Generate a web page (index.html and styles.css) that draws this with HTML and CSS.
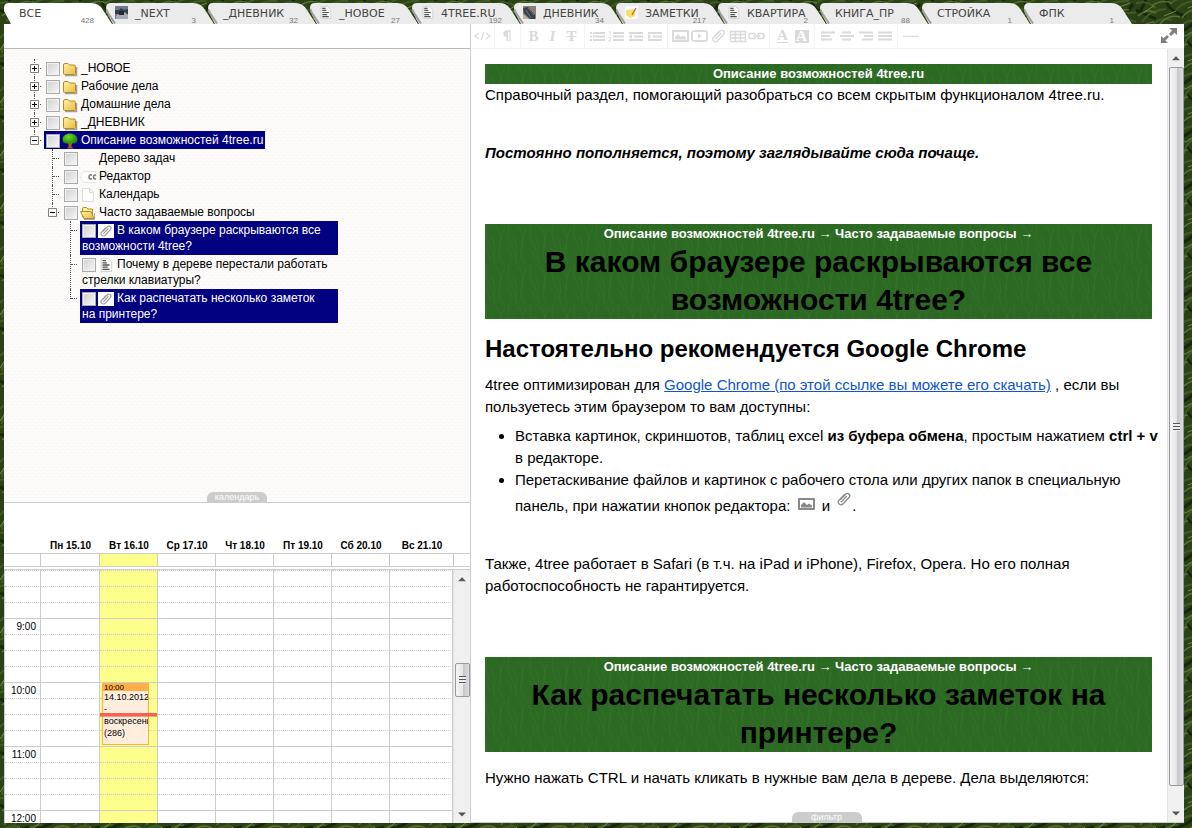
FILE: index.html
```html
<!DOCTYPE html>
<html lang="ru">
<head>
<meta charset="utf-8">
<title>4tree.ru</title>
<link rel="stylesheet" href="styles.css">
</head>
<body>
<svg class="sprite" aria-hidden="true">
  <defs>
    <linearGradient id="gold" x1="0" y1="0" x2="1" y2="1"><stop offset="0" stop-color="#fff3a8"/><stop offset="1" stop-color="#e9b93c"/></linearGradient>
    <radialGradient id="leaf" cx=".4" cy=".3" r=".7"><stop offset="0" stop-color="#6fe01c"/><stop offset="1" stop-color="#117a08"/></radialGradient>
  </defs>
  <symbol id="tab" viewBox="0 0 110 21"><path d="M0 5Q0 0 5 0H87Q95 0 99 7L108 21H7L0 8Z" fill="currentColor"/></symbol>
  <symbol id="tab-shade" viewBox="0 0 110 21"><path d="M0 6L2 10L9 20.500" fill="none" stroke="#777" stroke-opacity=".65" stroke-width="2"/></symbol>
  <symbol id="plus" viewBox="0 0 9 9"><path d="M.5.5h8v8h-8z" fill="#fff" stroke="#808080"/><path d="M2 4.500h5M4.500 2v5" stroke="#000"/></symbol>
  <symbol id="minus" viewBox="0 0 9 9"><path d="M.5.5h8v8h-8z" fill="#fff" stroke="#808080"/><path d="M2 4.500h5" stroke="#000"/></symbol>
  <symbol id="folder" viewBox="0 0 16 16"><path d="M3 14.500h11.500V6" fill="none" stroke="#777" stroke-opacity=".7" stroke-width="1.500"/><path d="M1.500 12.500V4Q1.500 2.500 3 2.500h3L7.500 4H12Q13.500 4 13.500 5.500V12.500Q13.500 13.500 12.500 13.500H2.500Q1.500 13.500 1.500 12.500Z" fill="url(#gold)" stroke="#b58a1f"/></symbol>
  <symbol id="folder-open" viewBox="0 0 16 16"><path d="M4 14.500h10.500V8" fill="none" stroke="#777" stroke-opacity=".6"/><path d="M2.500 12V3.500Q2.500 2.500 3.500 2.500h3L8 4h4.500V12Z" fill="#ffec9a" stroke="#b58a1f"/><path d="M.5 6.500H11L14 13.500H4Z" fill="url(#gold)" stroke="#b58a1f"/></symbol>
  <symbol id="tree" viewBox="0 0 16 16"><path d="M6.500 9h3v4.500l2 2h-6.500l1.500-2z" fill="#a65a12"/><path d="M8 .5C12 .5 15.500 3 15.500 6.500C15.500 10 12 11 10 10.500L8 12L6 10.500C3 11 .5 9.500.5 6.500C.5 3 4 .5 8 .5Z" fill="url(#leaf)"/><path d="M7 10l1 3l2-3.500" stroke="#c46a1c" fill="none"/></symbol>
  <symbol id="toggle" viewBox="0 0 16 16"><path d="M16 2.500H6Q1 3 1 8Q1 13 6 13.500H16" fill="#fff" stroke="#e4e4e4"/><path d="M12 6.200Q9 5 9 8Q9 11 12 9.700M16 6.200Q13.500 5.500 13.500 8Q13.500 10.500 16 10" fill="none" stroke="#777" stroke-width="1.500"/></symbol>
  <symbol id="blank" viewBox="0 0 16 16"><path d="M2.500 1.500h7l4 4v9h-11z" fill="#fff" stroke="#ddd"/><path d="M9.500 1.500v4h4" fill="none" stroke="#ddd"/></symbol>
  <symbol id="doc" viewBox="0 0 16 16"><path d="M2.500.5h8l4 4v11h-12z" fill="#f8f8f8" stroke="#ccc"/><path d="M4 3h4M4 5.500h5M4 8h8M4 10.500h6M4 13h8" stroke="#555" stroke-width="1.500"/></symbol>
  <symbol id="clip" viewBox="0 0 16 16"><path d="M4.500 8.500L9.500 3.300Q11.300 1.500 13 3T13 6.500L7.500 12.500Q5.300 14.700 3.200 13T3 9.300L8.500 3.500M10.800 5L6.300 9.900Q5.300 11 4.700 10.300" fill="none" stroke="currentColor" stroke-width="1.300"/></symbol>
  <symbol id="image" viewBox="0 0 17 13"><path d="M1 1h15v10H1z" fill="none" stroke="currentColor" stroke-width="2" stroke-linejoin="round"/><path d="M3 9.500V7l3-3l3 3l2-1.500l3 2V9.500z" fill="currentColor"/></symbol>
</svg>

<div class="app">
  <nav class="tabs" aria-label="Разделы">
    <a class="tab active" href="#"><svg class="shape"><use href="#tab"/></svg><span class="label">ВСЕ</span><span class="count">428</span></a>
    <a class="tab" href="#"><svg class="shape"><use href="#tab"/><use href="#tab-shade"/></svg><svg class="thumbnail" viewBox="0 0 13 13"><path d="M0 0h13v13H0z" fill="#707987"/><path d="M0 4h4l2-2 3 2 4-1v5H0z" fill="#343d4c"/><path d="M1 10l4-3 2 2 3-3 3 3v4H1z" fill="#a6abb3"/><path d="M4 5h5v4H4z" fill="#252b36"/></svg><span class="label">_NEXT</span><span class="count">3</span></a>
    <a class="tab" href="#"><svg class="shape"><use href="#tab"/><use href="#tab-shade"/></svg><span class="label">_ДНЕВНИК</span><span class="count">32</span></a>
    <a class="tab" href="#"><svg class="shape"><use href="#tab"/><use href="#tab-shade"/></svg><svg class="thumbnail"><use href="#doc"/></svg><span class="label">_НОВОЕ</span><span class="count">27</span></a>
    <a class="tab" href="#"><svg class="shape"><use href="#tab"/><use href="#tab-shade"/></svg><svg class="thumbnail"><use href="#doc"/></svg><span class="label">4TREE.RU</span><span class="count">192</span></a>
    <a class="tab" href="#"><svg class="shape"><use href="#tab"/><use href="#tab-shade"/></svg><svg class="thumbnail" viewBox="0 0 13 13"><path d="M0 0h13v13H0z" fill="#8b7f72"/><path d="M0 2l5-1 7 8v4H7L1 7z" fill="#3a404a"/><path d="M5 2l6 7M3 4l5 8" stroke="#6f7886"/><path d="M0 8l6 5H0z" fill="#c0b6a8"/></svg><span class="label">ДНЕВНИК</span><span class="count">34</span></a>
    <a class="tab" href="#"><svg class="shape"><use href="#tab"/><use href="#tab-shade"/></svg><svg class="thumbnail" viewBox="0 0 13 13"><path d="M0 0h13v13H0z" fill="#fafafa"/><path d="M1 4l8-1 1 7-5 2-4-3z" fill="#f4e06c"/><path d="M11 2L7 9" stroke="#c66c2c" stroke-width="1.500"/></svg><span class="label">ЗАМЕТКИ</span><span class="count">217</span></a>
    <a class="tab" href="#"><svg class="shape"><use href="#tab"/><use href="#tab-shade"/></svg><svg class="thumbnail"><use href="#doc"/></svg><span class="label">КВАРТИРА</span><span class="count">2</span></a>
    <a class="tab" href="#"><svg class="shape"><use href="#tab"/><use href="#tab-shade"/></svg><span class="label">КНИГА_ПР</span><span class="count">88</span></a>
    <a class="tab" href="#"><svg class="shape"><use href="#tab"/><use href="#tab-shade"/></svg><span class="label">СТРОЙКА</span><span class="count">1</span></a>
    <a class="tab" href="#"><svg class="shape"><use href="#tab"/><use href="#tab-shade"/></svg><span class="label">ФПК</span><span class="count">1</span></a>
  </nav>

  <main class="window">
    <div class="sidebar">
      <div class="sidebar-head"></div>
      <div class="tree-panel">
        <ul class="tree">
          <li><button class="expander" aria-label="Развернуть"><svg><use href="#plus"/></svg></button><label class="node"><input type="checkbox"><svg><use href="#folder"/></svg>_НОВОЕ</label></li>
          <li><button class="expander" aria-label="Развернуть"><svg><use href="#plus"/></svg></button><label class="node"><input type="checkbox"><svg><use href="#folder"/></svg>Рабочие дела</label></li>
          <li><button class="expander" aria-label="Развернуть"><svg><use href="#plus"/></svg></button><label class="node"><input type="checkbox"><svg><use href="#folder"/></svg>Домашние дела</label></li>
          <li><button class="expander" aria-label="Развернуть"><svg><use href="#plus"/></svg></button><label class="node"><input type="checkbox"><svg><use href="#folder"/></svg>_ДНЕВНИК</label></li>
          <li><button class="expander" aria-label="Свернуть"><svg><use href="#minus"/></svg></button><label class="node selected"><input type="checkbox"><svg><use href="#tree"/></svg>Описание возможностей 4tree.ru</label>
            <ul>
              <li><label class="node"><input type="checkbox"><svg></svg>Дерево задач</label></li>
              <li><label class="node"><input type="checkbox"><svg><use href="#toggle"/></svg>Редактор</label></li>
              <li><label class="node"><input type="checkbox"><svg><use href="#blank"/></svg>Календарь</label></li>
              <li><button class="expander" aria-label="Свернуть"><svg><use href="#minus"/></svg></button><label class="node"><input type="checkbox"><svg><use href="#folder-open"/></svg>Часто задаваемые вопросы</label>
                <ul>
                  <li><label class="node long selected"><input type="checkbox"><svg class="attached"><use href="#clip"/></svg>В каком браузере раскрываются все возможности 4tree?</label></li>
                  <li><label class="node long"><input type="checkbox"><svg><use href="#doc"/></svg>Почему в дереве перестали работать стрелки клавиатуры?</label></li>
                  <li><label class="node long selected"><input type="checkbox"><svg class="attached"><use href="#clip"/></svg>Как распечатать несколько заметок на принтере?</label></li>
                </ul>
              </li>
            </ul>
          </li>
        </ul>
        <button class="handle">календарь</button>
      </div>

      <section class="calendar">
        <table class="week">
          <colgroup><col class="c-time"><col class="c-first"><col class="c-day"><col class="c-day"><col class="c-day"><col class="c-day"><col class="c-day"><col><col class="c-gutter"></colgroup>
          <thead><tr><th></th><th>Пн 15.10</th><th>Вт 16.10</th><th>Ср 17.10</th><th>Чт 18.10</th><th>Пт 19.10</th><th>Сб 20.10</th><th>Вс 21.10</th><th></th></tr></thead>
          <tbody><tr><td></td><td></td><td class="today"></td><td></td><td></td><td></td><td></td><td></td><td></td></tr></tbody>
        </table>
        <div class="slots-area">
          <div class="slots-view">
            <table class="slots">
              <colgroup><col class="c-time"><col class="c-first"><col class="c-day"><col class="c-day"><col class="c-day"><col class="c-day"><col class="c-day"><col></colgroup>
              <tbody>
                <tr><th></th><td></td><td></td><td></td><td></td><td></td><td></td><td></td></tr>
                <tr><th></th><td></td><td></td><td></td><td></td><td></td><td></td><td></td></tr>
                <tr><th></th><td></td><td></td><td></td><td></td><td></td><td></td><td></td></tr>
                <tr class="hour"><th>9:00</th><td></td><td></td><td></td><td></td><td></td><td></td><td></td></tr>
                <tr><th></th><td></td><td></td><td></td><td></td><td></td><td></td><td></td></tr>
                <tr><th></th><td></td><td></td><td></td><td></td><td></td><td></td><td></td></tr>
                <tr><th></th><td></td><td></td><td></td><td></td><td></td><td></td><td></td></tr>
                <tr class="hour"><th>10:00</th><td></td><td><div class="event"><div class="event-time">10:00</div>14.10.2012 - воскресенье (286)</div><div class="now"></div></td><td></td><td></td><td></td><td></td><td></td></tr>
                <tr><th></th><td></td><td></td><td></td><td></td><td></td><td></td><td></td></tr>
                <tr><th></th><td></td><td></td><td></td><td></td><td></td><td></td><td></td></tr>
                <tr><th></th><td></td><td></td><td></td><td></td><td></td><td></td><td></td></tr>
                <tr class="hour"><th>11:00</th><td></td><td></td><td></td><td></td><td></td><td></td><td></td></tr>
                <tr><th></th><td></td><td></td><td></td><td></td><td></td><td></td><td></td></tr>
                <tr><th></th><td></td><td></td><td></td><td></td><td></td><td></td><td></td></tr>
                <tr><th></th><td></td><td></td><td></td><td></td><td></td><td></td><td></td></tr>
                <tr class="hour"><th>12:00</th><td></td><td></td><td></td><td></td><td></td><td></td><td></td></tr>
              </tbody>
            </table>
          </div>
          <div class="scrollbar calendar-scroll" aria-hidden="true"><i class="arrow up"></i><span class="before"></span><span class="thumb"><i class="grip"></i></span><span class="after"></span><i class="arrow down"></i></div>
        </div>
      </section>
    </div>

    <div class="editor">
      <div class="toolbar" role="toolbar" aria-label="Форматирование">
        <div class="group"><button aria-label="Код"><svg viewBox="0 0 19 16"><path d="M6 5L2 8l4 3M13 5l4 3l-4 3M11 4L8 12" fill="none" stroke="currentColor" stroke-width="1.200"/></svg></button></div>
        <div class="group"><button aria-label="Абзац"><svg viewBox="0 0 19 16"><path d="M13 3H8.500Q6 3.500 6 5.700Q6 8 9 8.500V13M9.500 3v10M12 3v10" fill="none" stroke="currentColor" stroke-width="1.300"/><path d="M9.500 3H8Q6 3.500 6 5.700T9.500 8.500z" fill="currentColor"/></svg></button></div>
        <div class="group"><button class="glyph bold" aria-label="Полужирный">B</button><button class="glyph italic" aria-label="Курсив">I</button><button class="glyph strike" aria-label="Зачёркнутый">T</button></div>
        <div class="group">
          <button aria-label="Маркированный список"><svg viewBox="0 0 19 16"><path d="M2 5h2M2 8.500h2M2 12h2M5 5h12M5 8.500h12M5 12h12" stroke="currentColor" stroke-width="2"/></svg></button>
          <button aria-label="Нумерованный список"><svg viewBox="0 0 19 16"><path d="M6 5h11M6 8.500h11M6 12h11" stroke="currentColor" stroke-width="2"/><path d="M2 3.500h1v4M1.500 9.500h2v1.500l-2 2h2.500" stroke="currentColor" fill="none"/></svg></button>
          <button aria-label="Уменьшить отступ"><svg viewBox="0 0 19 16"><path d="M3 5h14M8 8.500h9M3 12h14" stroke="currentColor" stroke-width="2"/><path d="M6 6v5L2.500 8.500z" fill="currentColor"/></svg></button>
          <button aria-label="Увеличить отступ"><svg viewBox="0 0 19 16"><path d="M3 5h14M8 8.500h9M3 12h14" stroke="currentColor" stroke-width="2"/><path d="M3 6v5l3.500-2.500z" fill="currentColor"/></svg></button>
        </div>
        <div class="group">
          <button aria-label="Изображение"><svg viewBox="0 0 19 16"><use href="#image" x="1" y="2" width="17" height="13"/></svg></button>
          <button aria-label="Видео"><svg viewBox="0 0 19 16"><rect x="2" y="3" width="15" height="10" rx="2" fill="none" stroke="currentColor" stroke-width="1.800"/><path d="M8 5.500v5l4-2.500z" fill="currentColor"/></svg></button>
          <button aria-label="Файл"><svg viewBox="0 0 16 16"><use href="#clip"/></svg></button>
          <button aria-label="Таблица"><svg viewBox="0 0 19 16"><path d="M2.500 3.500h15v10h-15zM2.500 6.500h15M2.500 10h15M7.500 3.500v10M12.500 3.500v10" fill="none" stroke="currentColor" stroke-width="1.400"/></svg></button>
          <button aria-label="Ссылка"><svg viewBox="0 0 19 16"><path d="M8 5.500H4Q2 5.500 2 8t2 2.500h4V9M11 5.500h4q2 0 2 2.500t-2 2.500h-4V9M8 7V5.500M11 7V5.500M6 8h7" fill="none" stroke="currentColor" stroke-width="1.600"/></svg></button>
        </div>
        <div class="group"><button class="glyph colour" aria-label="Цвет текста"><span>A</span></button><button class="glyph fill" aria-label="Цвет фона"><span>A</span></button></div>
        <div class="group">
          <button aria-label="По левому краю"><svg viewBox="0 0 19 16"><path d="M3 4.500h14M3 8h9M3 11.500h11" stroke="currentColor" stroke-width="2"/></svg></button>
          <button aria-label="По центру"><svg viewBox="0 0 19 16"><path d="M5 4.500h9M3 8h14M5 11.500h9" stroke="currentColor" stroke-width="2"/></svg></button>
          <button aria-label="По правому краю"><svg viewBox="0 0 19 16"><path d="M3 4.500h14M8 8h9M6 11.500h11" stroke="currentColor" stroke-width="2"/></svg></button>
          <button aria-label="По ширине"><svg viewBox="0 0 19 16"><path d="M3 4.500h14M3 8h14M3 11.500h14" stroke="currentColor" stroke-width="2"/></svg></button>
        </div>
        <div class="group last"><button aria-label="Линия"><svg viewBox="0 0 19 16"><path d="M2 8.500h16" stroke="currentColor" stroke-width="1.200"/></svg></button></div>
        <button class="expand" aria-label="На весь экран"><svg viewBox="0 0 16 15"><path d="M8 0h8v7l-2.500-2.200L10 8 8 6l3-3.500zM0 15V8l2.500 2.300L6 7l2 2-3.500 3.500L7 15z" fill="currentColor"/></svg></button>
      </div>
      <div class="page-area">
        <article class="page">
          <header class="banner lone"><p class="crumbs">Описание возможностей 4tree.ru</p></header>
          <p class="intro">Справочный раздел, помогающий разобраться со всем скрытым функционалом 4tree.ru.</p>
          <p class="notice">Постоянно пополняется, поэтому заглядывайте сюда почаще.</p>
          <header class="banner"><p class="crumbs">Описание возможностей 4tree.ru → Часто задаваемые вопросы →</p><h1>В каком браузере раскрываются все возможности 4tree?</h1></header>
          <h2>Настоятельно рекомендуется Google Chrome</h2>
          <p>4tree оптимизирован для <a href="#">Google Chrome (по этой ссылке вы можете его скачать)</a> , если вы пользуетесь этим браузером то вам доступны:</p>
          <ul>
            <li>Вставка картинок, скриншотов, таблиц excel <b>из буфера обмена</b>, простым нажатием <b>ctrl + v</b> в редакторе.</li>
            <li>Перетаскивание файлов и картинок с рабочего стола или других папок в специальную панель, при нажатии кнопок редактора: <svg class="inline-image"><use href="#image"/></svg> и <svg class="inline-clip"><use href="#clip"/></svg>.</li>
          </ul>
          <p class="also">Также, 4tree работает в Safari (в т.ч. на iPad и iPhone), Firefox, Opera. Но его полная работоспособность не гарантируется.</p>
          <header class="banner"><p class="crumbs">Описание возможностей 4tree.ru → Часто задаваемые вопросы →</p><h1>Как распечатать несколько заметок на принтере?</h1></header>
          <p class="answer">Нужно нажать CTRL и начать кликать в нужные вам дела в дереве. Дела выделяются:</p>
        </article>
        <div class="scrollbar page-scroll" aria-hidden="true"><i class="arrow up"></i><span class="thumb"><i class="grip"></i></span><span class="after"></span><i class="arrow down"></i></div>
      </div>
      <button class="handle filter">фильтр</button>
    </div>
  </main>
</div>
</body>
</html>
```
FILE: styles.css
```css
* { box-sizing: border-box; }

body {
  margin: 0;
  height: 100vh;
  overflow: hidden;
  font-family: "Liberation Sans", Arial, sans-serif;
  font-size: 12px;
  color: #000;
  background: #2b4217 url("data:image/svg+xml,%3Csvg xmlns='http://www.w3.org/2000/svg' width='71' height='53' fill='none' stroke-width='2'%3E%3Cpath stroke='%23182609' stroke-width='3' d='M0 10l20 9M30 0q3 12 20 16M60 20q-9 12-24 13M5 50q9-16 24-18M70 52q-13-2-20-12M10 0l-6 12M68 4l-9 12M30 50l8-9'/%3E%3Cpath stroke='%233f5a25' d='M-2 4q12-5 22 4M6 22q8-12 24-13M14 30q6-14 22-10M40 10q8-10 24-9M44 26q12-10 28-4M22 46q4-16 20-16M48 48q2-14 16-17M0 38q8-9 20-6M2 54q0-13 12-16M34 4q7-6 14-6M56 12q8 2 16 0M30 56q4-12 14-14M60 56q2-10 12-12'/%3E%3Cpath stroke='%23557233' stroke-width='1.500' d='M2 16q10-8 18-3M16 6q9-7 20-3M24 24q8-10 20-7M46 18q6-10 18-8M50 36q10-8 20-3M10 46q4-11 16-12M34 40q8-7 16-4M4 30q4-7 14-8M38 52q8-8 14-8M66 48q0-5 6-8'/%3E%3Cpath stroke='%236d8c44' stroke-width='1' d='M8 12l10-6M28 16l12-5M52 8l13-5M32 34l10-8M12 40l8-8M56 44l9-8M60 26l9-2M0 50l6-9'/%3E%3C/svg%3E");
}

button { padding: 0; border: 0; background: none; font: inherit; color: inherit; cursor: pointer; }
svg { display: block; }
.sprite { position: absolute; width: 0; height: 0; }

.app { display: flex; flex-direction: column; height: 100%; padding: 3px 8px 5px 4px; }

.tabs { display: flex; height: 21px; flex: none; }
.tab {
  position: relative;
  display: flex;
  align-items: center;
  flex: 0 0 102px;
  padding-left: 15px;
  color: #ebebeb;
  text-decoration: none;
  font: 11px/21px "DejaVu Sans", Verdana, sans-serif;
}
.tab.active { color: #fff; }
.tab .shape { position: absolute; inset: 0 auto auto 0; width: 110px; height: 21px; }
.tab .label { position: relative; color: #444; }
.tab .thumbnail { position: relative; width: 13px; height: 13px; margin: 0 7px 2px -6px; }
.tab .count { position: absolute; right: 12px; bottom: 0; color: #777; font: 8px/7px "Liberation Sans", Arial, sans-serif; }

.window {
  display: grid;
  grid-template-columns: 467px minmax(0, 1fr);
  flex: 1;
  min-height: 0;
  background: #fff;
}

.sidebar { display: flex; flex-direction: column; min-height: 0; border-right: 1px solid #ccc; }
.sidebar-head { height: 25px; flex: none; border-bottom: 1px solid #b9bcb4; }

.tree-panel {
  position: relative;
  flex: 1;
  min-height: 0;
  padding: 10px 26px;
  border-bottom: 1px solid #ccc;
  background: #fcfbf9 url("data:image/svg+xml,%3Csvg xmlns='http://www.w3.org/2000/svg' width='6' height='6'%3E%3Cpath stroke='%23f9f7f4' d='M0 1.500h3M3 4.500h3'/%3E%3C/svg%3E");
}
.tree, .tree ul { margin: 0; padding: 0; list-style: none; }
.tree ul { margin-left: 4px; }
.tree li { position: relative; padding-left: 14px; line-height: 18px; }
.tree li::before { content: ""; position: absolute; left: 4px; top: 0; bottom: 0; border-left: 1px dotted #555; }
.tree li:last-child::before { bottom: auto; height: 10px; }
.tree li::after { content: ""; position: absolute; left: 5px; top: 9px; width: 6px; border-top: 1px dotted #555; }
.expander { position: absolute; z-index: 1; left: 0; top: 5px; width: 9px; height: 9px; }
.expander svg { width: 9px; height: 9px; }
.node { display: table; padding: 0 2px; white-space: nowrap; font-size: 12px; }
.node.long { display: block; width: 258px; padding: 1px 10px 1px 2px; line-height: 16px; white-space: normal; }
.node.selected { background: #000080; color: #fff; }
.node input {
  appearance: none;
  width: 14px;
  height: 14px;
  margin: 0 2px 0 0;
  border: 1px solid #aaa;
  background: linear-gradient(135deg, #cfcfcf, #f8f8f8);
  box-shadow: inset 0 0 0 1px #f0f0f0;
  vertical-align: middle;
}
.node svg { display: inline-block; width: 16px; height: 16px; margin-right: 3px; vertical-align: middle; }
.node.long svg { height: 14px; }
.node .attached { background: #fff; color: #999; }

.handle {
  position: absolute;
  left: 50%;
  bottom: 0;
  width: 60px;
  height: 10px;
  margin-left: -30px;
  border-radius: 6px 6px 0 0;
  background: #ccc;
  color: #fff;
  font: 9px/10px "Liberation Sans", sans-serif;
}

.calendar { display: flex; flex-direction: column; flex: 0 0 320px; min-height: 0; height: 320px; max-height: 320px; }
.calendar table { width: 100%; table-layout: fixed; border-collapse: separate; border-spacing: 0; }
.calendar td, .calendar th { padding: 0; }
.c-time { width: 37px; }
.c-first { width: 59px; }
.c-day { width: 58px; }
.c-gutter { width: 16px; }
.week { flex: none; }
.week th { height: 51px; padding-bottom: 2px; vertical-align: bottom; border-bottom: 1px solid #ccc; font: bold 10px/11px "Liberation Sans", sans-serif; }
.week td { height: 12px; border-right: 1px solid #ccc; }
.week td:last-child { border-right: 0; }
.week .today { background: #fdff8c; }
.slots-area { display: flex; flex: 1; min-height: 0; border-top: 4px double #ccc; }
.slots-view { flex: 1; overflow: hidden; border-left: 1px solid #ccc; }
.slots .c-time { width: 36px; }
.slots td, .slots th { position: relative; height: 16px; border-top: 1px dotted #ccc; border-right: 1px solid #ccc; }
.slots .hour td, .slots .hour th { border-top-style: solid; }
.slots th { padding-right: 4px; text-align: right; font: 10px/15px "Liberation Sans", sans-serif; }
.slots td:nth-child(3) { background: #fdff8c; }
.event {
  position: absolute;
  z-index: 1;
  left: 2px;
  top: 0;
  width: 47px;
  height: 62px;
  padding: 0 1px;
  overflow: hidden;
  border: 1px solid #ffad46;
  background: #ffeedd;
  font-size: 9px;
  line-height: 12px;
}
.event-time { margin: 0 -1px; padding-left: 1px; background: #ffad46; font-size: 8px; line-height: 7px; }
.now { position: absolute; z-index: 2; left: 0; right: 0; top: 30px; height: 3px; background: #ff5f52; box-shadow: 0 1px 1px #a0522d80; }

.scrollbar { display: flex; flex-direction: column; align-items: center; flex: 0 0 16px; background: #f0f0f0; border-left: 1px solid #e2e2e2; }
.arrow { flex: 0 0 18px; width: 16px; background: linear-gradient(#333, #777); clip-path: polygon(50% 40%, 75% 62%, 25% 62%); }
.arrow.down { clip-path: polygon(25% 42%, 75% 42%, 50% 64%); }
.thumb { display: flex; align-items: center; justify-content: center; width: 15px; border: 1px solid #999; border-radius: 2px; background: linear-gradient(90deg, #f5f5f5, #e6e6e8 50%, #c4c4ca 55%, #dcdce0); }
.grip { width: 7px; height: 8px; background: repeating-linear-gradient(#555 0 1px, #eee 1px 3px); }
.calendar-scroll .before { flex: 75; }
.calendar-scroll .thumb { flex: 0 0 34px; }
.calendar-scroll .after { flex: 108; }
.page-scroll .thumb { flex: 1; }
.page-scroll .after { flex: 0 0 18px; }

.editor { position: relative; display: flex; flex-direction: column; min-width: 0; min-height: 0; border-bottom: 1px solid #ccc; }
.toolbar { display: flex; flex: none; height: 25px; border-bottom: 1px solid #f1f1f1; color: #dadada; }
.group { display: flex; align-items: center; padding: 0 3px; border-right: 1px solid #f4f4f4; }
.group:first-child { padding: 0 2px; }
.group.last { border-right: 0; }
.group button { width: 19px; height: 18px; }
.group svg { width: 19px; height: 16px; }
.glyph { font: 15px/18px "Liberation Serif", serif; text-align: center; }
.group .glyph { font: bold 15px/18px "Liberation Serif", serif; }
.group .glyph.italic { font-style: italic; }
.glyph.strike { text-decoration: line-through; }
.glyph span { display: block; width: 14px; height: 13px; margin: 0 auto; line-height: 13px; }
.glyph.colour span { width: 11px; border-bottom: 1px solid; line-height: 11px; }
.glyph.fill span { background: #dadada; color: #fff; }
.expand { align-self: flex-start; width: 16px; height: 15px; margin: 4px 7px 0 auto; color: #808080; }
.expand svg { width: 16px; height: 15px; }

.page-area { display: flex; flex: 1; min-height: 0; }
.page { flex: 1; min-width: 0; overflow: hidden; padding: 15px 15px 0 14px; font-size: 15px; line-height: 22px; }
.page p { margin: 0; }
.banner {
  text-align: center;
  background: #2c6922 url("data:image/svg+xml,%3Csvg xmlns='http://www.w3.org/2000/svg' width='22' height='40' fill='none' stroke='%2332702a'%3E%3Cpath d='M2 0q-3 12 2 20t6 20M10 2q8 8 5 20t3 18M20 4q-7 12-4 22M6 12q6 10 2 24M0 24q5 4 5 12'/%3E%3C/svg%3E");
}
.banner.lone { padding-bottom: 1px; }
.page .crumbs { color: #fff; font-size: 13px; font-weight: bold; line-height: 19px; }
.banner h1 { margin: 0; padding: 0 32px; font-size: 30px; line-height: 38px; }
.page .notice { margin: 36px 0 60px; font-weight: bold; font-style: italic; }
.page h2 { margin: 16px 0 11px; font-size: 24px; line-height: 28px; }
.page a { color: #1155cc; }
.page ul { margin: 7px -12px 36px 0; padding-left: 30px; }
.page svg { display: inline-block; color: #888; }
.inline-image { width: 17px; height: 13px; margin: 0 3px; }
.inline-clip { width: 16px; height: 16px; margin: 0 0 4px 2px; }
.page .also { margin-bottom: 60px; }
.page .answer { margin-top: 15px; }
.handle.filter { left: 50%; width: 70px; margin-left: -36px; }
```
